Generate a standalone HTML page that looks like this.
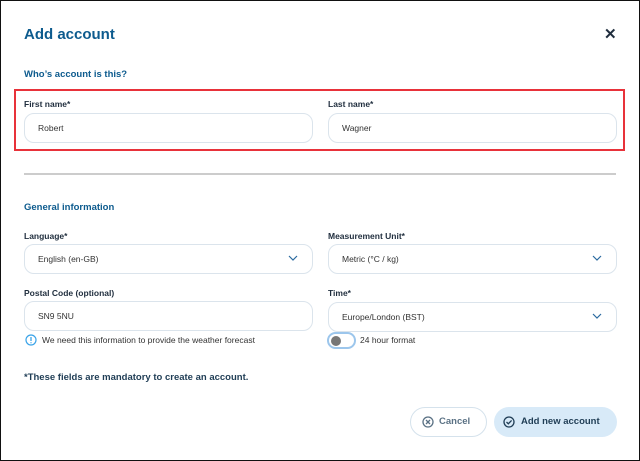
<!DOCTYPE html>
<html><head><style>
*{box-sizing:border-box;margin:0;padding:0}
body{width:640px;height:461px;background:#fff;font-family:"Liberation Sans",sans-serif;position:relative;overflow:hidden}
.a{position:absolute}
.t{color:#0d5b8e;font-weight:bold}
.lbl{font-size:8.5px;font-weight:bold;color:#1f2d3d}
.in{border:1px solid #dbe4ec;border-radius:10px;height:30px;font-size:8.5px;color:#333;padding-left:13px;line-height:28px}
.chev{position:absolute;right:14px;top:9px}
</style></head><body>
<div class="a" style="left:0;top:0;width:640px;height:461px;border:1px solid #111"></div>
<div class="a t" style="left:24px;top:26px;font-size:15px">Add account</div>
<div class="a" style="left:604px;top:25px;font-size:15px;font-weight:bold;color:#1f2d3d">✕</div>
<div class="a t" style="left:24px;top:69px;font-size:9.5px">Who’s account is this?</div>
<div class="a" style="left:14px;top:89px;width:611px;height:62px;border:2px solid #e8323a"></div>
<div class="a lbl" style="left:24px;top:99px">First name*</div>
<div class="a lbl" style="left:328px;top:99px">Last name*</div>
<div class="a in" style="left:24px;top:113px;width:289px">Robert</div>
<div class="a in" style="left:328px;top:113px;width:289px">Wagner</div>
<div class="a" style="left:24px;top:173px;width:592px;height:2px;background:#ccc"></div>
<div class="a t" style="left:24px;top:202px;font-size:9.5px">General information</div>
<div class="a lbl" style="left:24px;top:231px">Language*</div>
<div class="a lbl" style="left:328px;top:231px">Measurement Unit*</div>
<div class="a in" style="left:24px;top:244px;width:289px">English (en-GB)<svg class="chev" width="10" height="8" viewBox="0 0 10 8"><path d="M1 2l4 4 4-4" fill="none" stroke="#2a6aa0" stroke-width="1.2"/></svg></div>
<div class="a in" style="left:328px;top:244px;width:289px">Metric (°C / kg)<svg class="chev" width="10" height="8" viewBox="0 0 10 8"><path d="M1 2l4 4 4-4" fill="none" stroke="#2a6aa0" stroke-width="1.2"/></svg></div>
<div class="a lbl" style="left:24px;top:288px">Postal Code (optional)</div>
<div class="a lbl" style="left:328px;top:288px">Time*</div>
<div class="a in" style="left:24px;top:301px;width:289px">SN9 5NU</div>
<div class="a in" style="left:328px;top:302px;width:289px">Europe/London (BST)<svg class="chev" width="10" height="8" viewBox="0 0 10 8"><path d="M1 2l4 4 4-4" fill="none" stroke="#2a6aa0" stroke-width="1.2"/></svg></div>
<svg class="a" style="left:25px;top:334px" width="12" height="12" viewBox="0 0 12 12"><circle cx="6" cy="6" r="5" fill="none" stroke="#3aa3e8" stroke-width="1.2"/><path d="M6 3v4M6 8.3v1" stroke="#3aa3e8" stroke-width="1.3"/></svg>
<div class="a" style="left:42px;top:335px;font-size:8.5px;color:#333">We need this information to provide the weather forecast</div>
<div class="a" style="left:327px;top:332px;width:29px;height:17px;border:2px solid #9cc6ec;border-radius:9px;background:#fff"><div style="position:absolute;left:2px;top:2px;width:10px;height:10px;border-radius:50%;background:#777"></div></div>
<div class="a" style="left:360px;top:335px;font-size:8.5px;color:#333">24 hour format</div>
<div class="a" style="left:24px;top:372px;font-size:9.5px;font-weight:bold;color:#1f3d55">*These fields are mandatory to create an account.</div>
<div class="a" style="left:410px;top:407px;width:77px;height:30px;border:1px solid #d5e2ec;border-radius:15px;font-size:9.5px;font-weight:bold;color:#5a7184;line-height:28px;padding-left:28px">Cancel<svg style="position:absolute;left:11px;top:8px" width="12" height="12" viewBox="0 0 12 12"><circle cx="6" cy="6" r="5" fill="none" stroke="#5a7184" stroke-width="1.3"/><path d="M4 4l4 4M8 4l-4 4" stroke="#5a7184" stroke-width="1.3"/></svg></div>
<div class="a" style="left:494px;top:407px;width:123px;height:30px;background:#d8eaf8;border-radius:15px;font-size:9.5px;font-weight:bold;color:#1f3d55;line-height:30px;padding-left:27px">Add new account<svg style="position:absolute;left:9px;top:9px" width="12" height="12" viewBox="0 0 12 12"><circle cx="6" cy="6" r="5" fill="none" stroke="#1f3d55" stroke-width="1.3"/><path d="M3.5 6l1.8 1.8L8.6 4.4" fill="none" stroke="#1f3d55" stroke-width="1.3"/></svg></div>
</body></html>
